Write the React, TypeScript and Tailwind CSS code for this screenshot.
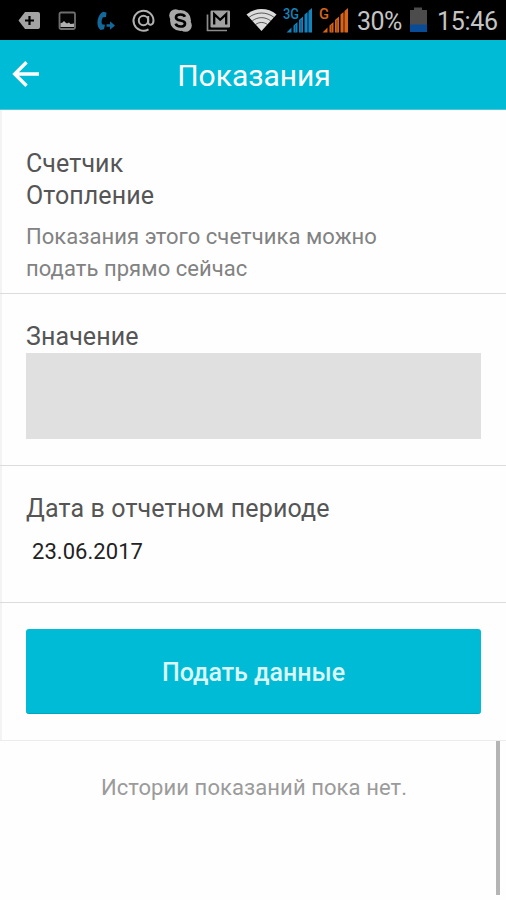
import type { ReactNode } from 'react';

function BackspaceIcon() {
  return (
    <svg className="ml-[18px] mt-px shrink-0" width="22" height="20" viewBox="0 0 22 20">
      <path d="M7 1h13a2 2 0 0 1 2 2v13a2 2 0 0 1-2 2H7L0.5 9.500z" fill="#a3a3a3" />
      <path d="M11.500 5v9M7 9.500h9" stroke="#000" strokeWidth="2.200" />
    </svg>
  );
}

function PictureIcon() {
  return (
    <svg className="ml-[18px] mt-[2px] shrink-0" width="19" height="20" viewBox="0 0 19 20">
      <rect x="1.500" y="1.500" width="15.500" height="16.500" rx="1.500" fill="#050505" stroke="#6f6f6f" strokeWidth="1.800" />
      <path d="M2.500 16v-3.800l2-.7 1.500-1.500 1.500 1.500 1.500 1 2-1 1.500 1.500 3.500-.5V16z" fill="#b0b0b0" />
    </svg>
  );
}

function CallIcon() {
  return (
    <svg className="ml-[20px] mt-[2px] shrink-0" width="20" height="20" viewBox="0 0 20 20" fill="#12699b">
      <path d="M6 0.800L9.500 1.500 9 6 6 6.300C4.500 8.500 4.300 11 5 13.200l3 .6-1 4.400-3.500.8C.8 16.800-.2 13 .8 8.500 1.600 5 3.500 2.200 6 .8z" />
      <path d="M9.500 13.300h3.500v-3l5 4.300-5 4.200v-3H9.500z" />
    </svg>
  );
}

function AtIcon() {
  return (
    <svg className="ml-[14px] mt-px shrink-0" width="25" height="25" viewBox="0 0 25 25" fill="none" stroke="#b0b0b0" strokeWidth="2">
      <circle cx="12.500" cy="12.500" r="4.700" />
      <path d="M17.200 8v6.200c0 3.800 5.300 3.300 5.300-1.700a10 10 0 1 0-5 8.900" />
    </svg>
  );
}

function SkypeIcon() {
  return (
    <svg className="ml-[12px] shrink-0" width="25" height="25" viewBox="0 0 25 25">
      <circle cx="12.500" cy="12.500" r="10.500" fill="#a8a8a8" />
      <circle cx="7.500" cy="7.500" r="6.300" fill="#a8a8a8" />
      <circle cx="17.500" cy="17.500" r="6.300" fill="#a8a8a8" />
      <path d="M17 8.800c-.8-1.800-2.500-2.300-4.500-2.300-2.500 0-4.500 1-4.500 3 0 4.200 9 1.800 9 5.900 0 2-2 3.100-4.500 3.100-2.300 0-4.200-.8-4.800-2.800" fill="none" stroke="#000" strokeWidth="2.700" />
    </svg>
  );
}

function MailIcon() {
  return (
    <svg className="ml-[13px] mt-[2px] shrink-0" width="25" height="22" viewBox="0 0 25 22">
      <path d="M1.500 4.500v16H21" fill="none" stroke="#8c8c8c" strokeWidth="1.700" />
      <rect x="4.500" y="0.500" width="19.500" height="17" rx="1.200" fill="#a0a0a0" />
      <path d="M8.200 14.500V4.200l6 5.600 6-5.600v10.300" fill="none" stroke="#000" strokeWidth="2.300" />
    </svg>
  );
}

function WifiIcon() {
  return (
    <svg className="ml-[15px] shrink-0" width="31" height="24" viewBox="0 0 31 24">
      <path d="M15.500 23L0.500 6.500C9 -.8 22 -.8 30.500 6.500z" fill="#dcdcdc" />
      <path d="M3 9.300c7.500-5.700 17.500-5.700 25 0M6.300 12.800c5.700-4.200 12.700-4.200 18.400 0M9.600 16.500c3.600-2.700 8.200-2.700 11.800 0" fill="none" stroke="#000" strokeOpacity="0.600" strokeWidth="1" />
    </svg>
  );
}

type SignalProps = { label: string; color: string; dim: string };

function Signal({ label, color, dim }: SignalProps) {
  return (
    <svg className="-mt-[7px] ml-[6px] shrink-0 overflow-visible" width="30" height="34" viewBox="0 -6 30 34">
      <path d="M3.500 26.500L8.500 21.500v5zM10.500 26.500v-7L14.500 16v10.500z" fill={color} />
      <path d="M16 26.500V14l4-3.500v16z" fill={color} />
      <path d="M21.500 26.500V8.500l3-2.500v20.500zM25.500 26.500V5L29 2v24.500z" fill={color} />
      <path d="M12.500 26V19M18 26V14M25 26V7" stroke={dim} strokeWidth="1.200" />
      <text x="0" y="12.500" fill={color} fontSize="15" fontWeight="500" fontFamily="Roboto, sans-serif" textLength={label.length === 1 ? 10 : 16} lengthAdjust="spacingAndGlyphs">
        {label}
      </text>
    </svg>
  );
}

function BatteryIcon() {
  return (
    <svg className="ml-[5px] shrink-0" width="19" height="26" viewBox="0 0 19 26">
      <path d="M1 3h4V0.500h8V3h5v15H1z" fill="#4c4c4c" />
      <path d="M1 17.500h17V25H1z" fill="#084c98" />
    </svg>
  );
}

function StatusBar() {
  return (
    <div className="flex h-10 shrink-0 items-center bg-black">
      <BackspaceIcon />
      <PictureIcon />
      <CallIcon />
      <AtIcon />
      <SkypeIcon />
      <MailIcon />
      <WifiIcon />
      <Signal label="3G" color="#1682bb" dim="#0b5c8c" />
      <Signal label="G" color="#d5651a" dim="#a34307" />
      <span className="ml-[8px] w-[47px] shrink-0 pt-[2px] text-[25px] leading-none tracking-[-0.6px] text-[#c4c4c4]">30%</span>
      <BatteryIcon />
      <span className="ml-[9px] pt-[2px] text-[25px] leading-none tracking-[-0.3px] text-[#c4c4c4]">15:46</span>
    </div>
  );
}

function Header() {
  return (
    <header className="relative flex h-[70px] shrink-0 items-center justify-center border-b border-[#4fc6d8] bg-[#00bbd5] text-white">
      <button className="absolute left-[12px] top-[20px]" aria-label="Назад">
        <svg width="28" height="28" viewBox="0 0 28 28" fill="none" stroke="#fff" strokeWidth="3.400">
          <path d="M27 14H3M14.500 2.200L2.700 14l11.800 11.800" />
        </svg>
      </button>
      <h1 className="pl-[2px] pt-[3px] text-[30px] leading-none">Показания</h1>
    </header>
  );
}

function Section({ className, children }: { className: string; children: ReactNode }) {
  return <section className={`border-b px-[26px] ${className}`}>{children}</section>;
}

export default function App() {
  return (
    <div className="flex h-[900px] w-[506px] flex-col overflow-hidden bg-[#fefefe] font-[Roboto,sans-serif]">
      <StatusBar />
      <Header />
      <main className="border-l-2 border-[#f3f3f3]">
        <div className="-ml-[2px]">
          <Section className="h-[184px] border-[#dcdcdc] pt-[38px]">
            <h2 className="text-[25px] leading-8 tracking-[0.1px] text-[#555]">
              Счетчик
              <br />
              Отопление
            </h2>
            <p className="mt-[9px] text-[22px] leading-8 tracking-[0.06px] text-[#828282]">
              Показания этого счетчика можно
              <br />
              подать прямо сейчас
            </p>
          </Section>
          <Section className="h-[172px] border-[#dcdcdc] pt-[27px]">
            <label className="block text-[25px] leading-8 tracking-[0.1px] text-[#555]">Значение</label>
            <div className="h-[86px] w-[455px] bg-[#e0e0e0]" />
          </Section>
          <Section className="h-[137px] border-[#dcdcdc] pt-[27px]">
            <label className="block text-[25px] leading-8 tracking-[0.14px] text-[#555]">Дата в отчетном периоде</label>
            <div className="mt-[11px] pl-[6px] text-[22px] leading-8 tracking-[0.05px] text-[#222]">23.06.2017</div>
          </Section>
          <Section className="h-[138px] border-[#ececec] pt-[26px]">
            <button className="h-[85px] w-[455px] rounded-[3px] border-b border-[#00a5bf] bg-[#00bbd5] pt-[3px] text-[25px] font-medium text-[#d9f6fa]">
              Подать данные
            </button>
          </Section>
        </div>
      </main>
      <div className="flex flex-1 pb-[5px]">
        <p className="flex-1 pl-[12px] pt-[31px] text-center text-[22px] leading-8 tracking-[0.08px] text-[#9b9b9b]">
          Истории показаний пока нет.
        </p>
        <div className="mr-[6px] w-[4px] bg-[#b5b5b5]" />
      </div>
    </div>
  );
}
